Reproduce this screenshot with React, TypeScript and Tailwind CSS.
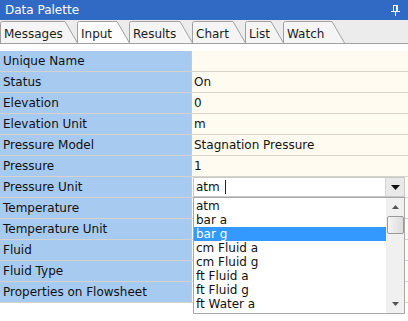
import React from 'react';

const rows: { label: string; value: string }[] = [
  { label: 'Unique Name', value: '' },
  { label: 'Status', value: 'On' },
  { label: 'Elevation', value: '0' },
  { label: 'Elevation Unit', value: 'm' },
  { label: 'Pressure Model', value: 'Stagnation Pressure' },
  { label: 'Pressure', value: '1' },
  { label: 'Pressure Unit', value: '' },
  { label: 'Temperature', value: '' },
  { label: 'Temperature Unit', value: '' },
  { label: 'Fluid', value: '' },
  { label: 'Fluid Type', value: '' },
  { label: 'Properties on Flowsheet', value: '' },
];

const tabs = [
  { label: 'Messages', width: 78 },
  { label: 'Input', width: 53, active: true },
  { label: 'Results', width: 64 },
  { label: 'Chart', width: 54 },
  { label: 'List', width: 39 },
  { label: 'Watch', width: 62 },
];

const units = ['atm', 'bar a', 'bar g', 'cm Fluid a', 'cm Fluid g', 'ft Fluid a', 'ft Fluid g', 'ft Water a'];

function Tab({ label, width, active }: { label: string; width: number; active?: boolean }) {
  return (
    <div className={`relative -ml-[1px] h-[22px] shrink-0 ${active ? 'z-10' : ''}`} style={{ width }}>
      <svg className="absolute inset-0" width={width} height={22}>
        <path
          d={`M0.5 22 V2.5 Q0.5 0.5 2.5 0.5 H${width - 13} L${width - 0.5} 22`}
          fill={active ? '#fdfdfd' : '#f5f5f5'}
          stroke="#a0a0a0"
        />
      </svg>
      <span className="relative block pl-[4px] pt-[6px] text-[12px] leading-[14px] text-[#1c1c1c]">{label}</span>
    </div>
  );
}

function PinIcon() {
  return (
    <svg width="9" height="11" viewBox="0 0 9 11">
      <rect x="2.5" y="0.5" width="4" height="6" fill="none" stroke="#fff" />
      <rect x="5" y="1" width="1.5" height="5.5" fill="#fff" />
      <rect x="0" y="6" width="9" height="1" fill="#fff" />
      <rect x="4" y="7" width="1" height="4" fill="#fff" />
    </svg>
  );
}

export default function App() {
  return (
    <div className="relative flex h-[321px] w-[408px] flex-col overflow-hidden bg-white font-['DejaVu_Sans',sans-serif]">
      <div className="flex h-[20px] items-center justify-between bg-[#316ac5] pl-[5px] pr-[8px]">
        <span className="text-[12px] leading-[15px] text-white">Data Palette</span>
        <PinIcon />
      </div>

      <div className="flex h-[24px] items-end border-b border-[#a0a0a0] bg-[#ececec] pl-[1px]">
        {tabs.map((t) => (
          <Tab key={t.label} label={t.label} width={t.width} active={t.active} />
        ))}
      </div>

      <div className="h-[7px] bg-white" />

      <div className="flex flex-col">
        {rows.map((r) => (
          <div key={r.label} className="flex h-[21px] border-b border-[#d6d3cc]">
            <div className="flex w-[192px] items-center border-r border-[#c9c9c9] bg-[#a6caf0] pl-[3px] text-[12px] text-[#111]">
              {r.label}
            </div>
            <div className="flex flex-1 items-center bg-[#fffbf0] pl-[2px] text-[12px] text-[#111]">{r.value}</div>
          </div>
        ))}
      </div>

      {/* pressure unit editor */}
      <div className="absolute left-[193px] top-[177px] flex h-[20px] w-[212px] border border-[#c8c8c8] bg-white">
        <div className="flex flex-1 items-center pl-[2px] text-[12px] text-[#111]">
          atm<span className="ml-[5px] inline-block h-[14px] w-[1px] bg-[#222]" />
        </div>
        <div className="flex w-[19px] items-center justify-center border-l border-[#d4d4d4] bg-[#e9e9e9]">
          <svg width="9" height="5" viewBox="0 0 9 5">
            <path d="M0 0 H9 L4.5 5 Z" fill="#111" />
          </svg>
        </div>
      </div>

      {/* dropdown list */}
      <div className="absolute left-[193px] top-[197px] flex h-[117px] w-[212px] border border-[#a8a8a8] bg-white">
        <div className="flex flex-1 flex-col pt-[1px]">
          {units.map((u, i) => (
            <div
              key={u}
              className={`flex h-[14px] items-center pl-[2px] text-[12px] ${
                i === 2 ? 'bg-[#3399ff] text-white' : 'text-[#111]'
              }`}
            >
              {u}
            </div>
          ))}
        </div>
        <div className="flex w-[18px] flex-col items-center bg-[#f0f0f0]">
          <div className="flex h-[18px] w-full items-center justify-center">
            <svg width="7" height="4" viewBox="0 0 7 4">
              <path d="M3.5 0 L7 4 H0 Z" fill="#555" />
            </svg>
          </div>
          <div className="h-[18px] w-[17px] rounded-[2px] border border-[#9a9a9a] bg-gradient-to-r from-[#f4f4f4] to-[#dcdcdc]" />
          <div className="flex-1" />
          <div className="flex h-[18px] w-full items-center justify-center">
            <svg width="7" height="4" viewBox="0 0 7 4">
              <path d="M0 0 H7 L3.5 4 Z" fill="#555" />
            </svg>
          </div>
        </div>
      </div>
    </div>
  );
}
